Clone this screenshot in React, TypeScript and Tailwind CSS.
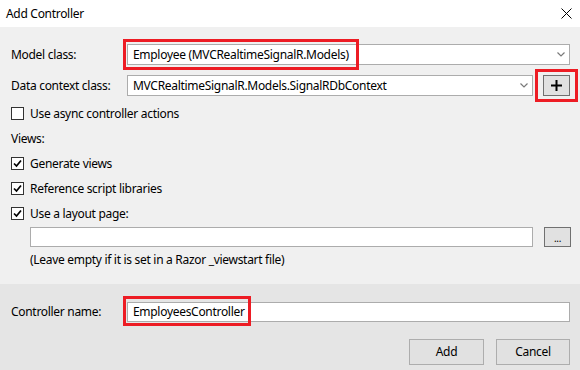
import React from "react";

function Chevron() {
  return (
    <svg width="8" height="5" viewBox="0 0 8 5" className="shrink-0">
      <path d="M0.5 0.5 L4 4 L7.5 0.5" fill="none" stroke="#7a7a7a" strokeWidth="1.2" />
    </svg>
  );
}

function Combo({ text, className }: { text: string; className: string }) {
  return (
    <div className={`flex h-[21px] items-center justify-between border border-[#acacac] bg-white pl-[5px] pr-[4px] ${className}`}>
      <span>{text}</span>
      <Chevron />
    </div>
  );
}

function Check({ checked, label }: { checked?: boolean; label: string }) {
  return (
    <div className="flex h-[13px] items-center gap-[6px]">
      <div className="flex h-[13px] w-[13px] items-center justify-center border border-[#333] bg-white">
        {checked && (
          <svg width="9" height="9" viewBox="0 0 9 9">
            <path d="M1 4.5 L3.5 7 L8 1.5" fill="none" stroke="#000" strokeWidth="1.7" />
          </svg>
        )}
      </div>
      <span>{label}</span>
    </div>
  );
}

function Highlight({ className }: { className: string }) {
  return <div className={`pointer-events-none absolute border-[3px] border-[#ed1c24] ${className}`} />;
}

export default function App() {
  return (
    <div
      className="relative flex h-[370px] w-[580px] flex-col bg-[#f0f0f0] text-[12px] leading-[16px] tracking-[-0.3px] text-black"
      style={{ fontFamily: '"Noto Sans", "Open Sans", sans-serif' }}
    >
      {/* title bar */}
      <div className="flex h-[27px] items-center justify-between bg-white pl-[6px] pr-[8px]">
        <span className="text-[12px]">Add Controller</span>
        <svg width="11" height="11" viewBox="0 0 11 11">
          <path d="M0.5 0.5 L10.5 10.5 M10.5 0.5 L0.5 10.5" stroke="#000" strokeWidth="1" />
        </svg>
      </div>

      <div className="flex flex-col pl-[11px]">
        <div className="mt-[17px] flex items-center">
          <span className="w-[116px]">Model class:</span>
          <Combo text="Employee (MVCRealtimeSignalR.Models)" className="w-[443px]" />
        </div>

        <div className="mt-[10px] flex items-center">
          <span className="w-[116px]">Data context class:</span>
          <Combo text="MVCRealtimeSignalR.Models.SignalRDbContext" className="w-[406px]" />
          <div className="ml-[10px] flex h-[21px] w-[27px] items-center justify-center border border-[#707070] bg-[#e1e1e1]">
            <svg width="11" height="11" viewBox="0 0 11 11">
              <path d="M5.5 0 V11 M0 5.5 H11" stroke="#000" strokeWidth="2" />
            </svg>
          </div>
        </div>

        <div className="mt-[11px]">
          <Check label="Use async controller actions" />
        </div>

        <div className="mt-[11px] h-[16px]">Views:</div>

        <div className="mt-[10px]">
          <Check checked label="Generate views" />
        </div>
        <div className="mt-[12px]">
          <Check checked label="Reference script libraries" />
        </div>
        <div className="mt-[12px]">
          <Check checked label="Use a layout page:" />
        </div>

        <div className="mt-[7px] flex items-center pl-[19px]">
          <div className="h-[20px] w-[503px] border border-[#acacac] bg-white" />
          <div className="ml-[11px] flex h-[20px] w-[27px] items-end justify-center border border-[#707070] bg-[#e1e1e1] pb-[3px] text-[10px] leading-[10px]">
            ...
          </div>
        </div>

        <div className="mt-[5px] h-[16px] pl-[19px]">(Leave empty if it is set in a Razor _viewstart file)</div>
      </div>

      {/* footer */}
      <div className="mt-auto flex h-[86px] flex-col bg-[#e5e5e5] pl-[11px]">
        <div className="mt-[18px] flex items-center">
          <span className="w-[116px]">Controller name:</span>
          <div className="flex h-[20px] w-[443px] items-center border border-[#acacac] bg-white pl-[5px]">
            EmployeesController
          </div>
        </div>
        <div className="mt-[17px] flex justify-end gap-[12px] pr-[10px]">
          <div className="flex h-[26px] w-[75px] items-center justify-center border border-[#adadad] bg-[#e1e1e1]">Add</div>
          <div className="flex h-[26px] w-[74px] items-center justify-center border border-[#adadad] bg-[#e1e1e1]">Cancel</div>
        </div>
      </div>

      <Highlight className="left-[123px] top-[39px] h-[31px] w-[236px]" />
      <Highlight className="left-[535px] top-[69px] h-[33px] w-[43px]" />
      <Highlight className="left-[123px] top-[296px] h-[30px] w-[128px]" />
    </div>
  );
}
